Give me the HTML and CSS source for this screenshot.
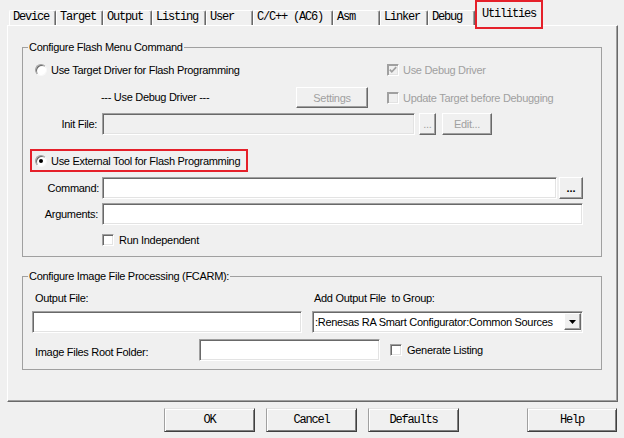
FILE: index.html
```html
<!DOCTYPE html>
<html>
<head>
<meta charset="utf-8">
<link rel="stylesheet" href="styles.css">
</head>
<body>
<div class="dialog">
  <div class="tabs">
    <div class="tab t-device">Device</div>
    <div class="tab t-target">Target</div>
    <div class="tab t-output">Output</div>
    <div class="tab t-listing">Listing</div>
    <div class="tab t-user">User</div>
    <div class="tab t-cc">C/C++ (AC6)</div>
    <div class="tab t-asm">Asm</div>
    <div class="tab t-linker">Linker</div>
    <div class="tab t-debug">Debug</div>
    <div class="tab active">Utilities</div>
  </div>

  <div class="panel">
    <fieldset class="group g1">
      <legend>Configure Flash Menu Command</legend>

      <div class="row ra">
        <div class="opt c-ra">
          <span class="radio"></span>
          <span>Use Target Driver for Flash Programming</span>
        </div>
        <div class="opt disabled">
          <span class="check dis">
            <svg width="8" height="8" viewBox="0 0 8 8"><polyline points="0.8,3.6 2.8,5.8 7.2,1.2" fill="none" stroke="#a0a0a0" stroke-width="1.7"/></svg>
          </span>
          <span>Use Debug Driver</span>
        </div>
      </div>

      <div class="row rb">
        <div class="c-rb">--- Use Debug Driver ---</div>
        <div class="btn dbtn b-settings">Settings</div>
        <div class="opt disabled">
          <span class="check dis"></span>
          <span>Update Target before Debugging</span>
        </div>
      </div>

      <div class="row rc">
        <div class="lbl l-init">Init File:</div>
        <div class="field dfield f-init"></div>
        <div class="btn dbtn b-dots">...</div>
        <div class="btn dbtn b-edit">Edit...</div>
      </div>

      <div class="row rd">
        <div class="opt hl">
          <span class="radio on"></span>
          <span>Use External Tool for Flash Programming</span>
        </div>
      </div>

      <div class="row re">
        <div class="lbl l-cmd">Command:</div>
        <div class="field f-cmd"></div>
        <div class="btn b-cdots">...</div>
      </div>

      <div class="row rf">
        <div class="lbl l-args">Arguments:</div>
        <div class="field f-args"></div>
      </div>

      <div class="row rg">
        <div class="opt c-rg">
          <span class="check"></span>
          <span>Run Independent</span>
        </div>
      </div>
    </fieldset>

    <fieldset class="group g2">
      <legend>Configure Image File Processing (FCARM):</legend>

      <div class="row r1">
        <div class="c-out">Output File:</div>
        <div class="c-add">Add Output File  to Group:</div>
      </div>

      <div class="row r2">
        <div class="field f-out"></div>
        <div class="field select">
          <span class="sel-text">:Renesas RA Smart Configurator:Common Sources</span>
          <span class="arrow">
            <svg width="7" height="4" viewBox="0 0 7 4"><polygon points="0,0 7,0 3.5,4" fill="#000"/></svg>
          </span>
        </div>
      </div>

      <div class="row r3">
        <div class="c-root">Image Files Root Folder:</div>
        <div class="field f-root"></div>
        <div class="opt c-gen">
          <span class="check"></span>
          <span>Generate Listing</span>
        </div>
      </div>
    </fieldset>
  </div>

  <div class="buttons">
    <div class="btn mbtn b-ok">OK</div>
    <div class="btn mbtn b-cancel">Cancel</div>
    <div class="btn mbtn b-defaults">Defaults</div>
    <div class="btn mbtn b-help">Help</div>
  </div>
</div>
</body>
</html>
```

FILE: styles.css
```css
* { box-sizing: border-box; }

html, body {
  margin: 0;
  padding: 0;
}

body {
  background: #f0f0f0;
  font-family: "Liberation Sans", Arial, sans-serif;
  font-size: 11px;
  letter-spacing: -0.3px;
  color: #000;
  width: 624px;
  height: 438px;
  overflow: hidden;
}

.dialog {
  width: 624px;
  height: 438px;
}

/* ---------- tabs ---------- */
.tabs {
  display: flex;
  align-items: flex-end;
  height: 25px;
  padding-left: 9px;
  position: relative;
  z-index: 2;
}

.tab {
  height: 15px;
  font-family: "Liberation Mono", "DejaVu Sans Mono", monospace;
  font-size: 12px;
  letter-spacing: -1.2px;
  line-height: 13px;
  padding-left: 3px;
  border-top: 1px solid #fff;
  border-left: 1px solid #fff;
  border-right: 1px solid #696969;
  box-shadow: inset -1px 0 #a0a0a0;
  border-radius: 2px 2px 0 0;
  white-space: nowrap;
  overflow: hidden;
}

.t-device { width: 47px; }
.t-target { width: 47px; }
.t-output { width: 49px; }
.t-listing { width: 54px; }
.t-user { width: 47px; }
.t-cc { width: 80px; }
.t-asm { width: 47px; }
.t-linker { width: 48px; }
.t-debug { width: 47px; }

.tab.active {
  align-self: flex-start;
  width: 68px;
  height: 29px;
  border: 2px solid #e5202a;
  border-radius: 0;
  box-shadow: none;
  background: #f0f0f0;
  padding-left: 5px;
  padding-top: 5px;
  line-height: 14px;
}

/* ---------- panel ---------- */
.panel {
  margin-left: 7px;
  width: 611px;
  height: 377px;
  border-top: 1px solid #fff;
  border-left: 1px solid #fff;
  border-right: 1px solid #696969;
  border-bottom: 1px solid #696969;
  box-shadow: inset -1px -1px #a0a0a0;
  padding: 14px 0 0 14px;
  position: relative;
  z-index: 1;
}

.group {
  margin: 0;
  padding: 0;
  width: 580px;
  border: 1px solid #a0a0a0;
  min-width: 0;
}

.group legend {
  margin-left: 5px;
  padding: 0 1px;
  line-height: 14px;
  height: 14px;
}

.g1 { padding-bottom: 8px; }
.g2 { margin-top: 12px; padding-bottom: 8px; }

.row {
  display: flex;
  align-items: center;
}

.opt {
  display: flex;
  align-items: center;
  gap: 4px;
  white-space: nowrap;
}

.disabled { color: #a0a0a0; }

.lbl {
  text-align: right;
  white-space: nowrap;
}

/* g1 rows */
.ra { height: 16px; margin-top: 8px; }
.c-ra { width: 364px; padding-left: 12px; }

.rb { height: 21px; margin-top: 9px; }
.c-rb { width: 273px; padding-left: 78px; padding-bottom: 2px; }
.b-settings { width: 72px; height: 21px; margin-right: 19px; }

.rc { height: 22px; margin-top: 5px; }
.l-init { width: 77px; padding-right: 3px; }
.f-init { width: 313px; margin-left: 2px; }
.b-dots { width: 17px; height: 22px; margin-left: 4px; }
.b-edit { width: 50px; height: 22px; margin-left: 6px; }

.rd { height: 23px; margin-top: 14px; }
.hl {
  margin-left: 7px;
  width: 218px;
  height: 23px;
  border: 2px solid #e5202a;
  padding-left: 3px;
}

.re { height: 22px; margin-top: 5px; }
.l-cmd { width: 77px; padding-right: 1px; }
.f-cmd { width: 455px; margin-left: 2px; }
.b-cdots {
  width: 24px;
  height: 22px;
  margin-left: 2px;
  font-weight: bold;
  letter-spacing: 0;
  line-height: 16px;
}

.rf { height: 22px; margin-top: 4px; }
.l-args { width: 77px; padding-right: 2px; }
.f-args { width: 481px; margin-left: 2px; }

.rg { height: 16px; margin-top: 7px; }
.c-rg { margin-left: 79px; gap: 5px; }

/* g2 rows */
.r1 { height: 14px; margin-top: 8px; }
.c-out { width: 291px; padding-left: 12px; }
.c-add { white-space: pre; }

.r2 { height: 21px; margin-top: 6px; }
.f-out { width: 270px; height: 21px; margin-left: 9px; }
.select {
  width: 271px;
  height: 21px;
  margin-left: 10px;
  display: flex;
  align-items: center;
  justify-content: space-between;
  padding: 0 1px 0 2px;
}
.sel-text { white-space: nowrap; }
.arrow {
  width: 17px;
  height: 17px;
  background: #f0f0f0;
  border-top: 1px solid #fff;
  border-left: 1px solid #fff;
  border-right: 1px solid #696969;
  border-bottom: 1px solid #696969;
  box-shadow: inset -1px -1px #a0a0a0;
  display: flex;
  align-items: center;
  justify-content: center;
}

.r3 { height: 22px; margin-top: 7px; }
.c-root { width: 176px; padding-left: 12px; padding-top: 3px; }
.f-root { width: 181px; }
.c-gen { margin-left: 10px; gap: 5px; }

/* ---------- controls ---------- */
.field {
  height: 22px;
  background: #fff;
  border-top: 1px solid #a0a0a0;
  border-left: 1px solid #a0a0a0;
  border-right: 1px solid #fff;
  border-bottom: 1px solid #fff;
  box-shadow: inset 1px 1px #696969, inset -1px -1px #e3e3e3;
}

.dfield { background: #f0f0f0; }

.radio {
  display: inline-block;
  position: relative;
  width: 12px;
  height: 12px;
  border-radius: 50%;
  background: #fff;
  border: 1px solid;
  border-color: #a0a0a0 #f8f8f8 #f8f8f8 #a0a0a0;
  box-shadow: inset 1px 1px #696969;
  flex: none;
}

.radio.on::after {
  content: "";
  position: absolute;
  left: 3px;
  top: 3px;
  width: 4px;
  height: 4px;
  border-radius: 50%;
  background: #000;
}

.check {
  display: inline-flex;
  align-items: center;
  justify-content: center;
  width: 12px;
  height: 12px;
  background: #fff;
  border-top: 1px solid #a0a0a0;
  border-left: 1px solid #a0a0a0;
  border-right: 1px solid #fff;
  border-bottom: 1px solid #fff;
  box-shadow: inset 1px 1px #696969, inset -1px -1px #e3e3e3;
  flex: none;
}

.check.dis {
  background: #f0f0f0;
  box-shadow: inset 1px 1px #a0a0a0, inset -1px -1px #e3e3e3;
}

.btn {
  display: flex;
  align-items: center;
  justify-content: center;
  background: #f0f0f0;
  border-top: 1px solid #fff;
  border-left: 1px solid #fff;
  border-right: 1px solid #696969;
  border-bottom: 1px solid #696969;
  box-shadow: inset -1px -1px #a0a0a0;
  white-space: nowrap;
}

.dbtn { color: #a0a0a0; }

/* ---------- bottom buttons ---------- */
.buttons {
  display: flex;
  margin-top: 6px;
  height: 24px;
}

.mbtn {
  width: 91px;
  height: 24px;
  font-family: "Liberation Mono", "DejaVu Sans Mono", monospace;
  font-size: 12px;
  letter-spacing: -1.2px;
  border-top: 1px solid #e3e3e3;
  border-left: 1px solid #a0a0a0;
  border-right: 1px solid #404040;
  border-bottom: 1px solid #404040;
  box-shadow: inset 1px 1px #fff, inset -1px -1px #808080;
}

.b-ok { margin-left: 164px; }
.b-cancel { margin-left: 11px; }
.b-defaults { margin-left: 11px; }
.b-help { margin-left: 68px; width: 90px; }
```
